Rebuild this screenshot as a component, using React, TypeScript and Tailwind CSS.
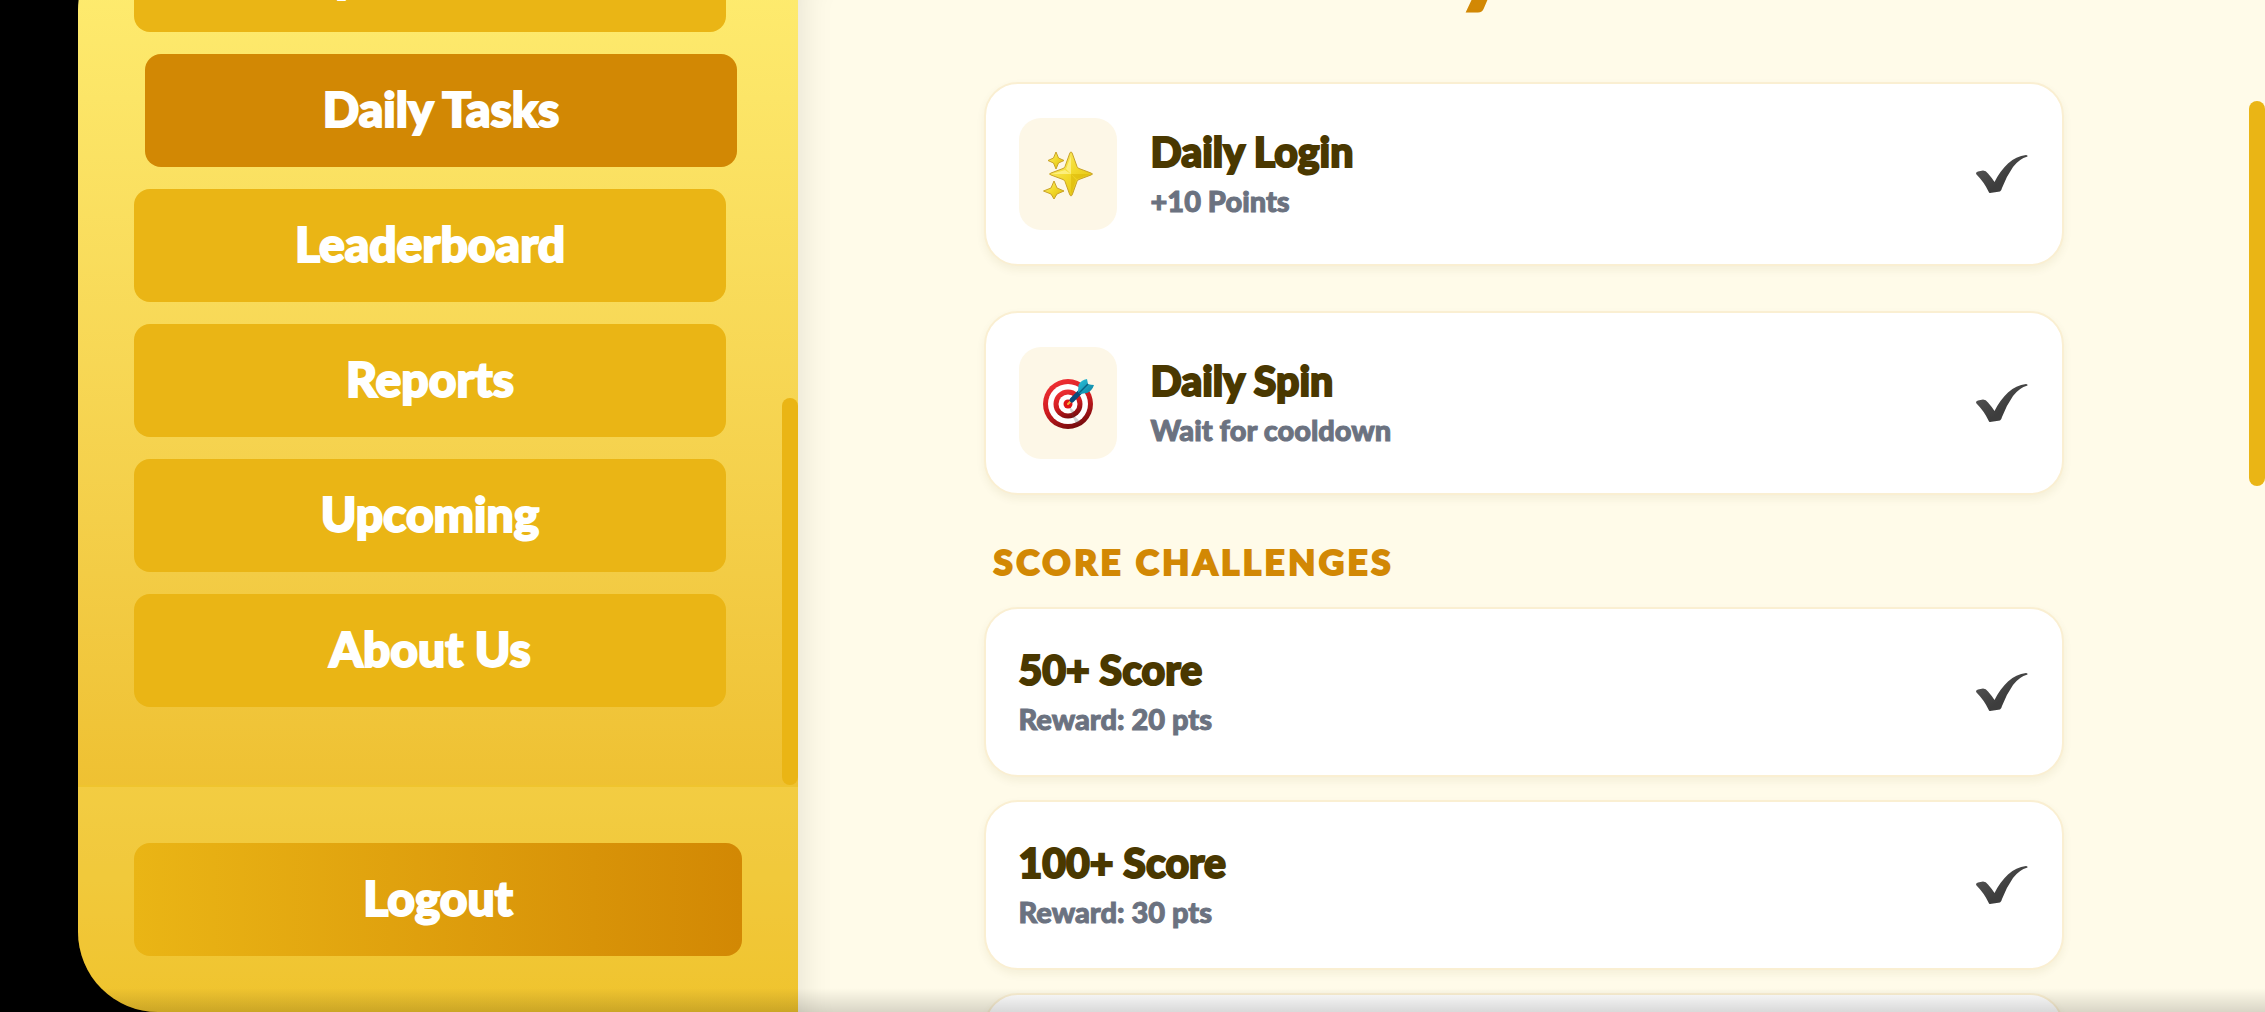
import { type ReactNode } from 'react';

const navItems = ['Spin & Win', 'Daily Tasks', 'Leaderboard', 'Reports', 'Upcoming', 'About Us'];

const dailyTasks = [
  { title: 'Daily Login', note: '+10 Points', icon: <Sparkles /> },
  { title: 'Daily Spin', note: 'Wait for cooldown', icon: <Target /> },
];

const scoreChallenges = [
  { title: '50+ Score', note: 'Reward: 20 pts' },
  { title: '100+ Score', note: 'Reward: 30 pts' },
  { title: '150+ Score', note: 'Reward: 40 pts' },
];

function Sparkles() {
  return (
    <svg viewBox="0 0 52 52" className="h-[52px] w-[52px]" aria-hidden="true">
      <defs>
        <linearGradient id="star" x1="0" y1="0" x2="1" y2="1">
          <stop offset="0" stopColor="#fff27a" />
          <stop offset="0.5" stopColor="#f2d92b" />
          <stop offset="1" stopColor="#dcb80a" />
        </linearGradient>
      </defs>
      <g stroke="#c9a227" strokeWidth="1" strokeLinejoin="round" fill="url(#star)">
        <path d="M29 4Q30 4 30.5 6L35 18.500Q35.500 20 37 20.500L49 25Q52 26 49 27L37 31.500Q35.500 32 35 33.500L30.500 46Q29 50 27.500 46L23 33.500Q22.500 32 21 31.500L9 27Q6 26 9 25L21 20.500Q22.500 20 23 18.500L27.500 6Q28 4 29 4Z" />
        <path d="M14 4L16.500 10L22 12.500L16.500 15L14 21L11.500 15L6 12.500L11.500 10Z" />
        <path d="M12 33L15 40L22 43L15 46L12 51L9 46L1.500 43L9 40Z" />
      </g>
      <path d="M29 26L29 8L24 21ZM29 26L10 26L23 22Z" fill="#fff59a" opacity="0.7" />
      <path d="M29 26L48 26L35 31ZM29 26L29 46L34 32Z" fill="#d9b400" opacity="0.5" />
    </svg>
  );
}

function Target() {
  return (
    <svg viewBox="0 0 52 52" className="h-[52px] w-[52px]" aria-hidden="true">
      <defs>
        <linearGradient id="ring" x1="0.3" y1="0" x2="0.7" y2="1">
          <stop offset="0" stopColor="#f03034" />
          <stop offset="0.5" stopColor="#cf1b20" />
          <stop offset="1" stopColor="#6f0a0c" />
        </linearGradient>
        <linearGradient id="flight" x1="0" y1="0" x2="1" y2="1">
          <stop offset="0" stopColor="#2cc3dc" />
          <stop offset="1" stopColor="#0d7f9f" />
        </linearGradient>
      </defs>
      <circle cx="26" cy="27" r="25" fill="url(#ring)" />
      <circle cx="26" cy="27" r="20" fill="#fff" />
      <circle cx="26" cy="27" r="14.500" fill="url(#ring)" />
      <circle cx="26" cy="27" r="9.500" fill="#fff" />
      <circle cx="26" cy="27" r="4.500" fill="#e01216" />
      <path d="M27 29L32 34L31 38L39 45L34 47L29 36Z" fill="#555" opacity="0.25" />
      <path d="M26 27L29 24" stroke="#f0b43c" strokeWidth="2" strokeLinecap="round" />
      <path d="M30 23L40 13" stroke="#0b4a7c" strokeWidth="5" strokeLinecap="round" />
      <path d="M36 15L36.500 8Q39 3 45 2L46 7Q49 8 52 8Q50 14 45 16L38 17Z" fill="url(#flight)" />
      <path d="M37 16L46 7" stroke="#0a6183" strokeWidth="1.500" />
    </svg>
  );
}

function CheckMark() {
  return (
    <svg viewBox="0 0 52 38" className="h-[38px] w-[52px] shrink-0" role="img" aria-label="Completed">
      <defs>
        <linearGradient id="check" x1="0" y1="0" x2="0.6" y2="0.6">
          <stop offset="0" stopColor="#5b5b5b" />
          <stop offset="1" stopColor="#3d3d3d" />
        </linearGradient>
      </defs>
      <path
        d="M0 18.500Q0 17 2 16.500L7 15.500Q10 15.500 12 18.500Q16 23 18.500 27Q24 16 32 8.500Q40 1 50 0Q52 0 51.500 1.500Q43 4 37 12Q30 22 26 33Q25.500 35.500 24 36.500L14 38Q13 38 12.500 36.500Q8 27 0.500 19.500Z"
        fill="url(#check)"
      />
    </svg>
  );
}

function TaskCard({ title, note, icon }: { title: string; note: string; icon?: ReactNode }) {
  return (
    <article className="flex items-center gap-[34px] rounded-[34px] border-2 border-[#faefd2] bg-white py-[34px] pr-[34px] pl-[33px] shadow-[0_4px_8px_rgba(100,80,0,0.07)]">
      {icon && (
        <div className="flex h-[112px] w-[98px] shrink-0 items-center justify-center rounded-[22px] bg-[#fdf7e7]">
          {icon}
        </div>
      )}
      <div className="min-w-0 flex-1">
        <h3 className="text-[41px] leading-[54px] font-black text-[#4a3800] [-webkit-text-stroke:2px_#4a3800]">
          {title}
        </h3>
        <p className="text-[29px] leading-[44px] font-black text-[#6b7280] [-webkit-text-stroke:1px_#6b7280]">
          {note}
        </p>
      </div>
      <CheckMark />
    </article>
  );
}

function Sidebar() {
  return (
    <aside className="relative z-10 -mt-[70px] flex w-[720px] shrink-0 flex-col overflow-hidden rounded-l-[80px] bg-linear-to-b from-[#ffee72] to-[#eab515]">
      <nav className="relative flex min-h-0 flex-1 flex-col justify-end gap-[22px] overflow-hidden pr-[72px] pb-[78px] pl-[56px]">
        {navItems.map((item) => (
          <button
            key={item}
            type="button"
            className={`h-[113px] shrink-0 rounded-2xl pb-1 text-[48px] font-black text-white [-webkit-text-stroke:2px_white] ${
              item === 'Daily Tasks' ? 'translate-x-[11px] bg-[#d28804]' : 'bg-[#eab515]'
            }`}
          >
            {item}
          </button>
        ))}
        <div className="absolute right-0 bottom-0 h-[387px] w-4 rounded-full bg-[#eab515]" />
      </nav>
      <div className="border-t-2 border-[#efc42e] bg-[#fff073]/25 p-[56px]">
        <button
          type="button"
          className="h-[113px] w-full rounded-2xl bg-linear-to-r from-[#eab515] to-[#d28804] pb-1 text-[48px] font-black text-white [-webkit-text-stroke:2px_white]"
        >
          Logout
        </button>
      </div>
    </aside>
  );
}

export default function App() {
  return (
    <div className="relative flex h-screen overflow-hidden bg-black pl-[78px] font-['Lato',sans-serif]">
      <Sidebar />
      <main className="relative flex-1 overflow-hidden bg-[#fffbe9] pr-4 shadow-[inset_36px_0_36px_-36px_rgba(0,0,0,0.12)]">
        <div className="mx-auto -mt-[102px] flex max-w-[1080px] flex-col">
          <h1 className="mb-[64px] text-center text-[96px] leading-[120px] font-black text-[#d28804] [-webkit-text-stroke:3px_#d28804]">
            Daily Tasks
          </h1>
          <div className="flex flex-col gap-[45px]">
            {dailyTasks.map((task) => (
              <TaskCard key={task.title} {...task} />
            ))}
          </div>
          <h2 className="mt-[42px] mb-[22px] px-[10px] text-[35px] leading-[48px] font-black tracking-widest text-[#d28804] uppercase [-webkit-text-stroke:2px_#d28804]">
            Score Challenges
          </h2>
          <div className="flex flex-col gap-[23px]">
            {scoreChallenges.map((challenge) => (
              <TaskCard key={challenge.title} {...challenge} />
            ))}
          </div>
        </div>
        <div className="absolute top-[101px] right-0 h-[385px] w-4 rounded-full bg-[#eab515]" />
      </main>
      <div className="pointer-events-none absolute inset-x-0 bottom-0 z-20 h-6 bg-linear-to-t from-black/15 to-transparent" />
    </div>
  );
}
